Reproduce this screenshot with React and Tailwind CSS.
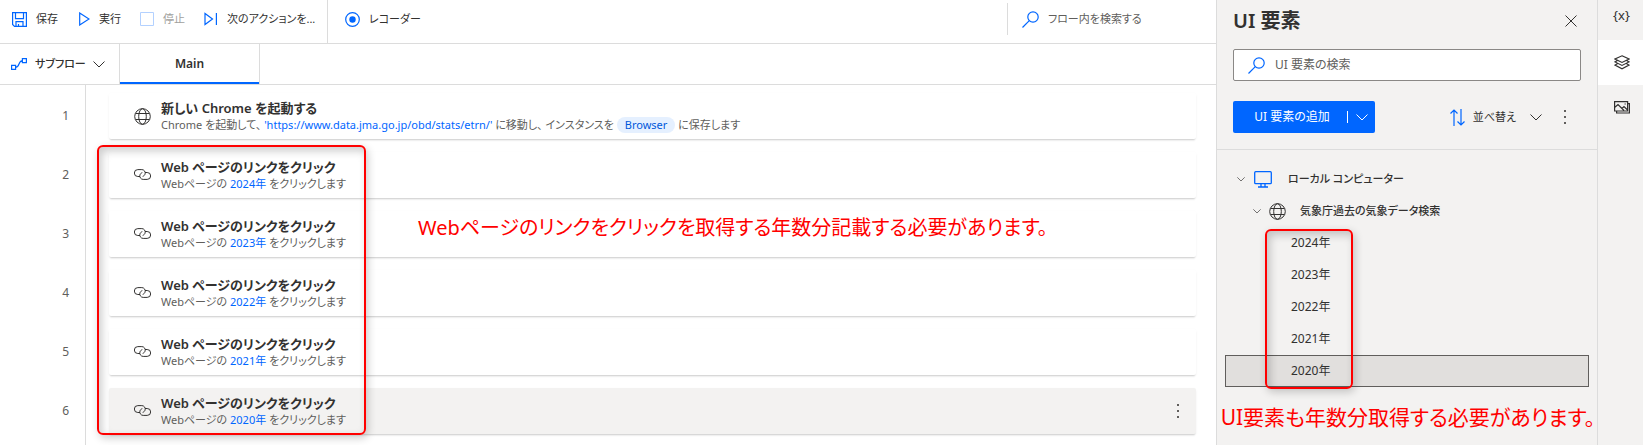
import React, { useState } from "react";

const STEPS = [2024, 2023, 2022, 2021, 2020];

const Chevron = ({ size = 12, className = "" }) => (
  <svg
    width={size}
    height={size}
    viewBox="0 0 12 12"
    fill="none"
    stroke="currentColor"
    className={`shrink-0 ${className}`}
  >
    <path d="M0.5 3.5 6 9l5.5-5.5" />
  </svg>
);

const SearchIcon = () => (
  <svg width="17" height="17" viewBox="0 0 17 17" fill="none" stroke="#0066ff" strokeWidth="1.2" className="shrink-0">
    <circle cx="11" cy="6" r="5.2" />
    <path d="M7.3 9.7.5 16.5" />
  </svg>
);

const GlobeIcon = () => (
  <svg width="17" height="17" viewBox="0 0 17 17" fill="none" stroke="#323130" className="shrink-0">
    <circle cx="8.5" cy="8.5" r="7.8" />
    <ellipse cx="8.5" cy="8.5" rx="3.8" ry="7.8" />
    <path d="M1.5 5.5h14M1.5 11.5h14" />
  </svg>
);

const LinkIcon = () => (
  <svg width="17" height="12" viewBox="0 0 17 12" fill="none" stroke="#323130" className="shrink-0">
    <path d="M6 7.500H3.800a3.400 3.400 0 0 1 0-6.900h4a3.400 3.400 0 0 1 3.300 4.300c-.3 1.200-1.200 2.100-2.400 2.500" />
    <path d="M11 3.500h2.200a3.400 3.400 0 0 1 0 6.900h-4a3.400 3.400 0 0 1-3.300-4.300c.3-1.200 1.200-2.100 2.400-2.500" />
  </svg>
);

const MoreIcon = () => (
  <svg width="4" height="16" viewBox="0 0 4 16" fill="#605e5c">
    <path d="M1 1h2v2H1zM1 7h2v2H1zM1 13h2v2H1z" />
  </svg>
);

/* Toolbar above the flow canvas */
const Toolbar = () => (
  <div className="flex h-11 border-b border-[#dcdcdc] text-[11px]">
    <div className="flex h-[38px] w-[327px] items-center pl-3 whitespace-nowrap">
      <button className="flex w-[67px] items-center gap-[9px]">
        <svg width="15" height="15" viewBox="0 0 15 15" fill="none" stroke="#0066ff" strokeWidth="1.2">
          <path d="M.6.6h13.800v13.800H2.500L.6 12.500zM3.500.6v6h8v-6M4 14.400V9.700h7v4.700M6.500 12v2.400" />
        </svg>
        保存
      </button>
      <button className="flex w-[61px] items-center gap-[9px]">
        <svg width="11" height="14" viewBox="0 0 11 14" fill="none" stroke="#0066ff" strokeWidth="1.2">
          <path d="M.7 1v12l9.300-6z" />
        </svg>
        実行
      </button>
      <button className="flex w-16 items-center gap-[9px] text-[#a19f9d]" disabled>
        <svg width="14" height="14" viewBox="0 0 14 14" fill="none" stroke="#b3d1ff">
          <path d="M.5.5h13v13H.5z" />
        </svg>
        停止
      </button>
      <button className="flex items-center gap-[9px]">
        <svg width="14" height="14" viewBox="0 0 14 14" fill="none" stroke="#0066ff" strokeWidth="1.2">
          <path d="M1 1.500v11l7.500-5.500zM12.400 1v12" />
        </svg>
        次のアクションを...
      </button>
    </div>
    <div className="flex border-l border-[#dcdcdc] pl-[17px]">
      <button className="flex h-[38px] items-center gap-[9px]">
        <svg width="15" height="15" viewBox="0 0 15 15" fill="none">
          <circle cx="7.500" cy="7.500" r="6.800" stroke="#0066ff" strokeWidth="1.200" />
          <circle cx="7.500" cy="7.500" r="3.200" fill="#0066ff" />
        </svg>
        レコーダー
      </button>
    </div>
    <label className="mt-[3px] ml-auto flex h-8 w-[209px] items-center gap-[9px] border-l border-[#dcdcdc] pl-3.5">
      <SearchIcon />
      <input
        aria-label="フロー内を検索する"
        placeholder="フロー内を検索する"
        className="min-w-0 flex-1 bg-transparent outline-none placeholder:text-[#605e5c]"
      />
    </label>
  </div>
);

const Tabs = () => (
  <div className="flex h-[41px] border-b border-[#dcdcdc]">
    <button className="flex w-[120px] items-center border-r border-[#dcdcdc] pl-[11px] text-[11px] font-medium">
      <svg
        width="16"
        height="12"
        viewBox="0 0 16 12"
        fill="none"
        stroke="#0066ff"
        strokeWidth="1.200"
        className="mr-2 shrink-0"
      >
        <path d="M.6 7.400h4v4h-4zM11.400.6h4v4h-4zM4.600 9.400c4.400 0 2.400-6.800 6.800-6.800" />
      </svg>
      サブフロー
      <Chevron className="mr-3.5 ml-auto" />
    </button>
    <button className="w-[140px] border-r border-[#dcdcdc] text-[12px] font-semibold shadow-[inset_0_-2px_0_#0066ff]">
      Main
    </button>
  </div>
);

const ActionRow = ({ number, icon, title, selected = false, children }) => (
  <li className="flex h-[46px] items-center">
    <span className="w-[85px] shrink-0 pr-4 text-right text-[12px] text-[#605e5c]">{number}</span>
    <div
      className={`mr-5 ml-6 flex h-full flex-1 items-center rounded-xs pl-[25px] shadow-[0_2px_2px_-1px_rgba(0,0,0,0.18),0_1px_3px_rgba(0,0,0,0.04)] ${
        selected ? "bg-[#f3f2f1]" : "bg-white"
      }`}
    >
      {icon}
      <div className="ml-2.5 flex-1">
        <div className="text-[13px] leading-[18px] font-semibold">{title}</div>
        <div className="text-[11px] leading-4 text-[#605e5c]">{children}</div>
      </div>
      {selected && (
        <button aria-label="その他" className="mr-4">
          <MoreIcon />
        </button>
      )}
    </div>
  </li>
);

const FlowCanvas = () => (
  <ol className="flex flex-1 flex-col gap-[13px] bg-[linear-gradient(#dcdcdc,#dcdcdc)] bg-[length:1px_100%] bg-[position:85px_0] bg-no-repeat pt-2">
    <ActionRow number={1} icon={<GlobeIcon />} title="新しい Chrome を起動する">
      Chrome を起動して、{" "}
      <span className="text-[#0066ff]">'https://www.data.jma.go.jp/obd/stats/etrn/'</span>{" "}
      に移動し、 インスタンスを{" "}
      <span className="inline-block rounded-full bg-[#e5f0ff] px-2 text-[#0058db]">Browser</span>{" "}
      に保存します
    </ActionRow>
    {STEPS.map((year, index) => (
      <ActionRow
        key={year}
        number={index + 2}
        icon={<LinkIcon />}
        title="Web ページのリンクをクリック"
        selected={year === 2020}
      >
        Webページの <span className="text-[#0066ff]">{year}年</span> をクリックします
      </ActionRow>
    ))}
  </ol>
);

const ElementsPanel = () => {
  const [selected, setSelected] = useState(2020);

  return (
    <aside className="w-[382px] shrink-0 border-x border-[#dcdcdc] bg-[#f3f2f1]">
      <div className="border-b border-[#dcdcdc] px-4 pb-4">
        <div className="flex h-[49px] items-center justify-between pr-1 pb-2">
          <h2 className="text-[20px] font-semibold">UI 要素</h2>
          <button aria-label="閉じる">
            <svg width="12" height="12" viewBox="0 0 12 12" stroke="#323130">
              <path d="M.5.5l11 11M11.500.5l-11 11" />
            </svg>
          </button>
        </div>
        <label className="flex h-8 items-center gap-2.5 rounded-xs border border-[#8a8886] bg-white pl-3.5 text-[12px]">
          <SearchIcon />
          <input
            aria-label="UI 要素の検索"
            placeholder="UI 要素の検索"
            className="min-w-0 flex-1 bg-transparent outline-none placeholder:text-[#605e5c]"
          />
        </label>
        <div className="mt-5 flex h-8 items-center text-[11px]">
          <div className="flex h-8 w-[142px] items-center rounded-xs bg-[#0066ff] text-white">
            <button className="flex-1 pl-1 text-[12px]">UI 要素の追加</button>
            <button aria-label="追加オプション" className="flex h-3 w-7 items-center justify-center border-l border-white">
              <Chevron />
            </button>
          </div>
          <button className="ml-auto flex items-center">
            <svg
              width="15"
              height="17"
              viewBox="0 0 15 17"
              fill="none"
              stroke="#0066ff"
              strokeWidth="1.200"
              className="mr-2"
            >
              <path d="M4 17V1M.5 4.500 4 1l3.500 3.500M11 0v16M7.500 12.500 11 16l3.500-3.500" />
            </svg>
            並べ替え
            <Chevron className="ml-3.5" />
          </button>
          <button aria-label="その他" className="mr-3.5 ml-[21px]">
            <MoreIcon />
          </button>
        </div>
      </div>

      <ul className="px-2 pt-[13px] text-[12px]">
        <li className="flex h-8 items-center pl-3 text-[11px] font-medium">
          <Chevron size={8} />
          <svg
            width="18"
            height="17"
            viewBox="0 0 18 17"
            fill="none"
            stroke="#0066ff"
            strokeWidth="1.300"
            className="mr-4 ml-[9px]"
          >
            <rect x=".7" y=".7" width="16.600" height="12" rx="1" />
            <path d="M7 12.700v3M11 12.700v3M4 16h10" />
          </svg>
          ローカル コンピューター
        </li>
        <li className="flex h-8 items-center gap-2 pl-7 text-[11px] font-medium">
          <Chevron size={8} />
          <GlobeIcon />
          <span className="pl-1.5">気象庁過去の気象データ検索</span>
        </li>
        {STEPS.map((year) => (
          <li key={year}>
            <button
              onClick={() => setSelected(year)}
              className={`h-8 w-full border pl-[65px] text-left ${
                selected === year ? "border-[#605e5c] bg-[#e1dfdd]" : "border-transparent"
              }`}
            >
              {year}年
            </button>
          </li>
        ))}
      </ul>
    </aside>
  );
};

const SideStrip = () => (
  <nav className="flex w-[45px] shrink-0 flex-col bg-[#f3f2f1]">
    <button className="h-10 pb-2 pl-0.5 text-[13px]">{"{x}"}</button>
    <button aria-label="UI 要素" className="flex h-[45px] items-center justify-center bg-white pl-0.5">
      <svg width="16" height="15" viewBox="0 0 16 15" fill="none" stroke="#323130" strokeWidth="1.100">
        <path d="M8 .8 15 4 8 7.400 1 4zM3.400 5.500 1 6.900l7 3.500 7-3.500-2.400-1.400M3.400 8.700 1 10.100l7 3.700 7-3.700-2.400-1.400" />
      </svg>
    </button>
    <button aria-label="画像" className="flex h-[45px] items-center justify-center pl-0.5">
      <svg width="16" height="13" viewBox="0 0 16 13" fill="none" stroke="#323130" strokeWidth="1.200">
        <path d="M.6.6h13v9.400H.6zM13.600 2.600h1.800v9.400H2.600V10M.6 6.500 4 3.500l6 6M8 7.500l2-2 3.600 3.500" />
        <path d="M10.500 3h1.300" />
      </svg>
    </button>
  </nav>
);

/* Red frames and notes laid over the window */
const Notes = () => (
  <div className="pointer-events-none leading-8 whitespace-nowrap text-[#ff0000]">
    <div className="absolute top-[145px] left-[97px] h-[290px] w-[269px] rounded-md border-2 border-[#ff0000] shadow-[2px_3px_8px_rgba(0,0,0,0.2),inset_3px_4px_8px_rgba(0,0,0,0.2)]" />
    <p className="absolute top-[212px] left-[418px] text-[20px]">
      Webページのリンクをクリックを取得する年数分記載する必要があります。
    </p>
    <div className="absolute top-[229px] right-[290px] h-[160px] w-[88px] rounded-md border-2 border-[#ff0000] shadow-[2px_3px_8px_rgba(0,0,0,0.2),inset_3px_4px_8px_rgba(0,0,0,0.2)]" />
    <p className="absolute top-[401px] right-[48px] text-[21px]">UI要素も年数分取得する必要があります。</p>
  </div>
);

export default function App() {
  return (
    <div className="relative flex min-h-screen bg-white font-['Noto_Sans','Noto_Sans_CJK_JP',sans-serif] text-[#323130] [font-feature-settings:'palt']">
      <main className="flex min-w-0 flex-1 flex-col">
        <Toolbar />
        <Tabs />
        <FlowCanvas />
      </main>
      <ElementsPanel />
      <SideStrip />
      <Notes />
    </div>
  );
}
